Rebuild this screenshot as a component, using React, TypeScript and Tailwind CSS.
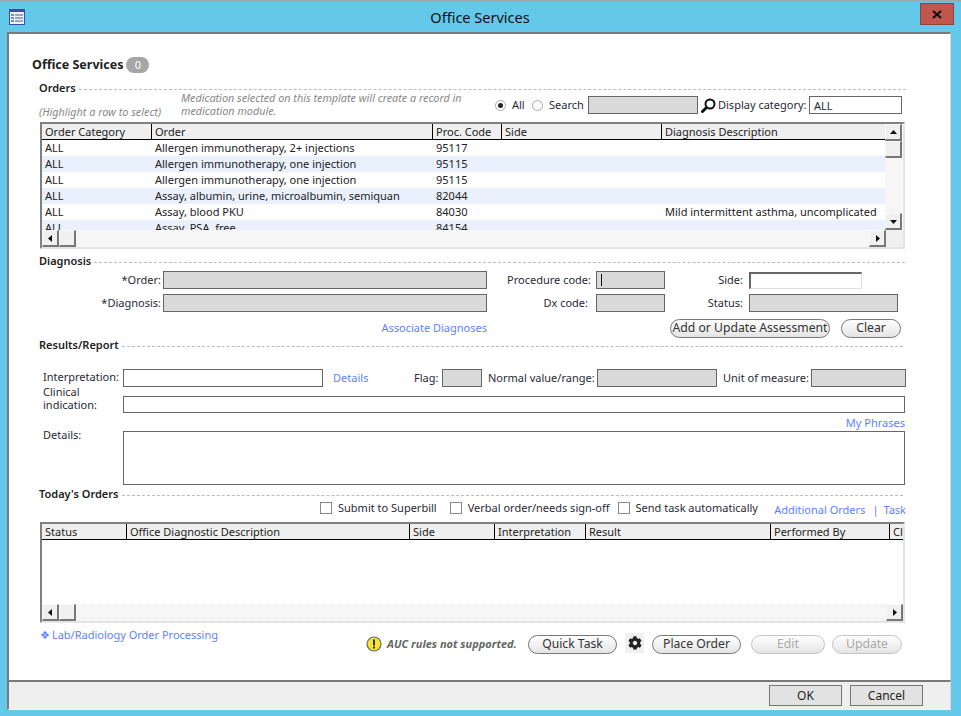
import { ReactNode } from 'react';
import { FaCog } from 'react-icons/fa';

const ordersCols = [
  { label: 'Order Category', w: 110 },
  { label: 'Order', w: 281 },
  { label: 'Proc. Code', w: 69 },
  { label: 'Side', w: 160 },
  { label: 'Diagnosis Description', w: 223 },
];

const todayCols = [
  { label: 'Status', w: 85 },
  { label: 'Office Diagnostic Description', w: 283 },
  { label: 'Side', w: 85 },
  { label: 'Interpretation', w: 91 },
  { label: 'Result', w: 185 },
  { label: 'Performed By', w: 119 },
  { label: 'Cl', w: 13 },
];

const rows = [
  ['ALL', 'Allergen immunotherapy, 2+ injections', '95117', '', ''],
  ['ALL', 'Allergen immunotherapy, one injection', '95115', '', ''],
  ['ALL', 'Allergen immunotherapy, one injection', '95115', '', ''],
  ['ALL', 'Assay, albumin, urine, microalbumin, semiquan', '82044', '', ''],
  ['ALL', 'Assay, blood PKU', '84030', '', 'Mild intermittent asthma, uncomplicated'],
  ['ALL', 'Assay, PSA, free', '84154', '', ''],
];

const Legend = ({ title, className, w = 866 }: { title: string; className?: string; w?: number }) => (
  <div className={`flex items-center h-[12px] shrink-0 ${className ?? ''}`} style={{ width: w }}>
    <span className="text-[11px] font-semibold text-[#222] whitespace-nowrap">{title}</span>
    <div className="flex-1 ml-[3px] mt-[3px] border-t border-dashed border-[#bbb]" />
  </div>
);

const Field = ({ w, h = 18, white, className }: { w: number; h?: number; white?: boolean; className?: string }) => (
  <div
    className={`shrink-0 border border-[#666] ${white ? 'bg-white' : 'bg-[#dadada]'} ${className ?? ''}`}
    style={{ width: w, height: h }}
  />
);

const Label = ({ w, children, className }: { w: number; children: ReactNode; className?: string }) => (
  <div className={`shrink-0 text-right whitespace-nowrap ${className ?? ''}`} style={{ width: w }}>
    {children}
  </div>
);

const Pill = ({ w, children, disabled }: { w: number; children: ReactNode; disabled?: boolean }) => (
  <button
    className={`shrink-0 h-[19px] rounded-full border flex items-center justify-center text-[12.2px] whitespace-nowrap bg-gradient-to-b from-white to-[#e4e4e4] ${
      disabled ? 'border-[#c4c4c4] text-[#aaa]' : 'border-[#777] text-[#333]'
    }`}
    style={{ width: w }}
  >
    {children}
  </button>
);

const Arrow = ({ dir }: { dir: 'left' | 'right' | 'up' | 'down' }) => {
  const points = {
    left: '6,1 2,4.5 6,8',
    right: '3,1 7,4.5 3,8',
    up: '1,6 4.5,2 8,6',
    down: '1,3 4.5,7 8,3',
  }[dir];
  return (
    <svg width="9" height="9" viewBox="0 0 9 9">
      <polygon points={points} fill="#111" />
    </svg>
  );
};

const ScrollBtn = ({ children, className }: { children?: ReactNode; className?: string }) => (
  <div
    className={`shrink-0 flex items-center justify-center bg-[#f0f0f0] border-t border-l border-t-[#f8f8f8] border-l-[#f8f8f8] border-r-2 border-b-2 border-r-[#777] border-b-[#777] ${className ?? ''}`}
  >
    {children}
  </div>
);

const Dither = 'bg-[repeating-conic-gradient(#eeeeee_0_25%,#ffffff_0_50%)] bg-[length:2px_2px]';

const HeaderRow = ({ cols }: { cols: { label: string; w: number }[] }) => (
  <div className="flex h-[16px] bg-[#efefef] border-b border-black shrink-0 overflow-hidden">
    {cols.map((c) => (
      <div
        key={c.label}
        className="shrink-0 pl-[3px] border-r border-black text-[11px] leading-[15px] text-[#222] whitespace-nowrap overflow-hidden last:border-r-0"
        style={{ width: c.w }}
      >
        {c.label}
      </div>
    ))}
  </div>
);

const HScroll = ({ cornerW }: { cornerW: number }) => (
  <div className={`flex h-[17px] shrink-0 ${Dither}`}>
    <ScrollBtn className="w-[17px] h-[17px]">
      <Arrow dir="left" />
    </ScrollBtn>
    <ScrollBtn className="w-[17px] h-[17px]" />
    <div className="flex-1" />
    <ScrollBtn className="w-[17px] h-[17px]">
      <Arrow dir="right" />
    </ScrollBtn>
    {cornerW > 0 && <div className="bg-[#f0f0f0]" style={{ width: cornerW }} />}
  </div>
);

const OrdersTable = () => (
  <div className="ml-[1px] w-[865px] h-[127px] shrink-0 border-t-2 border-l-2 border-[#808080] border-r-2 border-b-2 border-r-[#e4e4e4] border-b-[#e4e4e4] flex flex-col overflow-hidden">
    <div className="flex h-[106px]">
      <div className="w-[843px] flex flex-col overflow-hidden">
        <HeaderRow cols={ordersCols} />
        {rows.map((r, i) => (
          <div key={i} className={`flex h-[16px] shrink-0 ${i % 2 ? 'bg-[#eaf1fc]' : 'bg-white'}`}>
            {r.map((cell, j) => (
              <div
                key={j}
                className="shrink-0 pl-[3px] text-[11px] leading-[16px] text-[#222] whitespace-nowrap overflow-hidden"
                style={{ width: ordersCols[j].w }}
              >
                {cell}
              </div>
            ))}
          </div>
        ))}
      </div>
      <div className={`w-[17px] flex flex-col ${Dither}`}>
        <ScrollBtn className="h-[17px]">
          <Arrow dir="up" />
        </ScrollBtn>
        <ScrollBtn className="h-[17px]" />
        <div className="flex-1" />
        <ScrollBtn className="h-[17px]">
          <Arrow dir="down" />
        </ScrollBtn>
      </div>
    </div>
    <HScroll cornerW={17} />
  </div>
);

const TodayTable = () => (
  <div className="ml-[1px] w-[865px] h-[101px] shrink-0 border-t-2 border-l-2 border-[#808080] border-r-2 border-b-2 border-r-[#e4e4e4] border-b-[#e4e4e4] flex flex-col overflow-hidden">
    <HeaderRow cols={todayCols} />
    <div className="flex-1 bg-white" />
    <HScroll cornerW={0} />
  </div>
);

const Check = ({ label, className }: { label: string; className?: string }) => (
  <div className={`flex items-center shrink-0 ${className ?? ''}`}>
    <div className="w-[12px] h-[12px] border border-[#888] bg-white" />
    <span className="ml-[6px] whitespace-nowrap">{label}</span>
  </div>
);

const Radio = ({ checked }: { checked?: boolean }) => (
  <div className="shrink-0 w-[11px] h-[11px] rounded-full border border-[#aaa] bg-white flex items-center justify-center">
    {checked && <div className="w-[5px] h-[5px] rounded-full bg-[#222]" />}
  </div>
);

export default function App() {
  return (
    <div className="w-[961px] h-[716px] overflow-hidden bg-[#63c8ea] flex flex-col font-['Noto_Sans','DejaVu_Sans',sans-serif] text-[11px] text-[#2a2a35]">
      <div className="h-[2px] shrink-0 bg-[#a0a6aa]" />
      {/* title bar */}
      <div className="h-[30px] shrink-0 flex items-start">
        <svg width="16" height="16" viewBox="0 0 16 16" className="ml-[9px] mt-[7px] shrink-0">
          <rect x="0.5" y="0.5" width="15" height="15" fill="#eef3fb" stroke="#3d4f9c" />
          <rect x="0" y="0" width="16" height="3" fill="#3d4f9c" />
          <rect x="2" y="5" width="3" height="2" fill="#6f8fd0" />
          <rect x="2" y="8" width="3" height="2" fill="#6f8fd0" />
          <rect x="2" y="11" width="3" height="2" fill="#6f8fd0" />
          <rect x="6" y="5" width="8" height="2" fill="#9aa6c4" />
          <rect x="6" y="8" width="8" height="2" fill="#9aa6c4" />
          <rect x="6" y="11" width="8" height="2" fill="#9aa6c4" />
        </svg>
        <div className="flex-1 text-center text-[14.5px] leading-[20px] mt-[5px] ml-[15px] text-[#111]">
          Office Services
        </div>
        <div className="shrink-0 w-[34px] h-[22px] mt-[1px] mr-[7px] bg-[#c0574f] border border-[#8a4640] flex items-center justify-center">
          <svg width="10" height="9" viewBox="0 0 10 9">
            <path d="M1 1 L9 8 M9 1 L1 8" stroke="#111" strokeWidth="2.2" />
          </svg>
        </div>
      </div>

      {/* dialog body */}
      <div className="ml-[7px] w-[944px] h-[648px] shrink-0 bg-white border-l-2 border-t-2 border-[#7a7a7a] border-r border-r-[#d9d9d9] pl-[30px] flex flex-col">
        <div className="flex items-center h-[16px] mt-[23px] ml-[-7px] shrink-0">
          <span className="text-[12.5px] font-bold text-[#222] pt-[1px]">Office Services</span>
          <span className="ml-[3px] w-[23px] h-[16px] rounded-full bg-[#a6a6a6] text-white text-[11px] leading-[16px] text-center">
            0
          </span>
        </div>

        <Legend title="Orders" className="mt-[9px]" w={867} />
        <div className="flex h-[31px] -mt-[3px] shrink-0">
          <div className="w-[142px] pt-[13px] italic text-[#888] whitespace-nowrap text-[10.8px]">
            (Highlight a row to select)
          </div>
          <div className="w-[314px] italic text-[#888] leading-[13px] text-[10.8px]">
            Medication selected on this template will create a record in medication module.
          </div>
          <div className="flex items-center h-[24px] mt-[2px]">
            <Radio checked />
            <span className="ml-[6px] w-[20px] shrink-0">All</span>
            <Radio />
            <span className="ml-[6px] w-[39px] shrink-0">Search</span>
            <Field w={110} />
            <svg width="15" height="15" viewBox="0 0 15 15" className="ml-[3px] shrink-0">
              <circle cx="9" cy="6" r="4.5" fill="#fff" stroke="#111" strokeWidth="2" />
              <path d="M5.5 9.5 L1.5 13.5" stroke="#111" strokeWidth="3" strokeLinecap="round" />
            </svg>
            <span className="ml-[2px] w-[87px] shrink-0 whitespace-nowrap">Display category:</span>
            <div className="ml-[4px] w-[93px] h-[18px] shrink-0 border border-[#666] bg-white pl-[4px] leading-[17px]">ALL</div>
          </div>
        </div>
        <OrdersTable />

        <Legend title="Diagnosis" className="mt-[6px]" />
        <div className="flex items-center h-[18px] mt-[4px] shrink-0">
          <Label w={122}>*Order:</Label>
          <Field w={324} className="ml-[2px]" />
          <Label w={104}>Procedure code:</Label>
          <div className="ml-[5px] w-[69px] h-[18px] border border-[#666] bg-[#dadada] pl-[4px] pt-[2px] shrink-0">
            <div className="w-[1px] h-[12px] bg-black" />
          </div>
          <Label w={78}>Side:</Label>
          <div className="ml-[6px] w-[113px] h-[17px] border border-[#e0e0e0] border-t-2 border-l-2 border-t-[#666] border-l-[#666] bg-white shrink-0" />
        </div>
        <div className="flex items-center h-[18px] mt-[5px] shrink-0">
          <Label w={122}>*Diagnosis:</Label>
          <Field w={324} className="ml-[2px]" />
          <Label w={101}>Dx code:</Label>
          <Field w={69} className="ml-[8px]" />
          <Label w={78}>Status:</Label>
          <Field w={149} className="ml-[6px]" />
        </div>
        <div className="flex items-center h-[19px] mt-[7px] shrink-0">
          <div className="w-[448px] text-right text-[#5e82ff]">Associate Diagnoses</div>
          <div className="ml-[183px]">
            <Pill w={160}>Add or Update Assessment</Pill>
          </div>
          <div className="ml-[11px]">
            <Pill w={60}>Clear</Pill>
          </div>
        </div>

        <Legend title="Results/Report" className="mt-[1px]" w={864} />
        <div className="flex items-center h-[18px] mt-[18px] shrink-0">
          <span className="ml-[4px] w-[80px] shrink-0 -mt-[4px] leading-[13px] whitespace-nowrap">Interpretation:</span>
          <Field w={200} white />
          <span className="ml-[10px] w-[81px] shrink-0 text-[#5e82ff]">Details</span>
          <span className="w-[28px] shrink-0">Flag:</span>
          <Field w={40} />
          <span className="ml-[6px] w-[109px] shrink-0 whitespace-nowrap">Normal value/range:</span>
          <Field w={120} />
          <span className="ml-[6px] w-[88px] shrink-0 whitespace-nowrap">Unit of measure:</span>
          <Field w={95} />
        </div>
        <div className="flex h-[28px] -mt-[2px] shrink-0">
          <div className="ml-[4px] w-[80px] leading-[13px] shrink-0">
            Clinical
            <br />
            indication:
          </div>
          <Field w={782} h={17} white className="mt-[11px]" />
        </div>
        <div className="w-[866px] h-[10px] text-right text-[#5e82ff] leading-[10px] mt-[5px] shrink-0">My Phrases</div>
        <div className="flex h-[54px] mt-[3px] shrink-0">
          <span className="ml-[4px] w-[80px] shrink-0 -mt-[4px]">Details:</span>
          <Field w={782} h={54} white />
        </div>

        <Legend title="Today's Orders" className="mt-[3px]" w={864} />
        <div className="flex items-center h-[14px] mt-[1px] w-[867px] shrink-0">
          <Check label="Submit to Superbill" className="ml-[281px]" />
          <Check label="Verbal order/needs sign-off" className="ml-[13px]" />
          <Check label="Send task automatically" className="ml-[8px]" />
          <span className="ml-auto mt-[4px] text-[#5e82ff] whitespace-nowrap">
            Additional Orders<span className="ml-[7px] mr-[5px]">|</span>Task
          </span>
        </div>
        <div className="h-[7px] shrink-0" />
        <TodayTable />

        <div className="flex h-[30px] mt-[4px] shrink-0">
          <div className="w-[327px] shrink-0 text-[#5e82ff] whitespace-nowrap">
            <span className="text-[11px] mr-[2px] ml-[1px]">❖</span>Lab/Radiology Order Processing
          </div>
          <div className="flex items-center h-[22px] mt-[6px]">
            <svg width="16" height="16" viewBox="0 0 16 16" className="shrink-0">
              <circle cx="8" cy="8" r="7" fill="#f5e62c" stroke="#666" strokeWidth="1.2" />
              <rect x="7" y="3.5" width="2" height="6" fill="#333" />
              <rect x="7" y="10.5" width="2" height="2" fill="#333" />
            </svg>
            <span className="ml-[5px] w-[141px] shrink-0 font-bold italic text-[#666] text-[11px] whitespace-nowrap">
              AUC rules not supported.
            </span>
            <Pill w={89}>Quick Task</Pill>
            <div className="ml-[8px] w-[19px] h-[20px] -mt-[3px] bg-[#f0f0f0] flex items-center justify-center shrink-0">
              <FaCog className="w-[14px] h-[14px] text-[#222]" />
            </div>
            <div className="ml-[8px]">
              <Pill w={89}>Place Order</Pill>
            </div>
            <div className="ml-[10px]">
              <Pill w={74} disabled>
                Edit
              </Pill>
            </div>
            <div className="ml-[7px]">
              <Pill w={70} disabled>
                Update
              </Pill>
            </div>
          </div>
        </div>
      </div>

      {/* footer */}
      <div className="ml-[7px] w-[944px] h-[30px] shrink-0 bg-[#efefef] border-l-2 border-t-2 border-[#7a7a7a] border-r border-r-[#d9d9d9] border-b border-b-[#f8f8f8] flex justify-end items-start pt-[3px] pr-[27px] gap-[8px] text-[12px]">
        <button className="w-[73px] h-[21px] border border-[#777] bg-[#e2e2e2] text-[#222]">OK</button>
        <button className="w-[73px] h-[21px] border border-[#777] bg-[#e2e2e2] text-[#222]">Cancel</button>
      </div>
    </div>
  );
}
